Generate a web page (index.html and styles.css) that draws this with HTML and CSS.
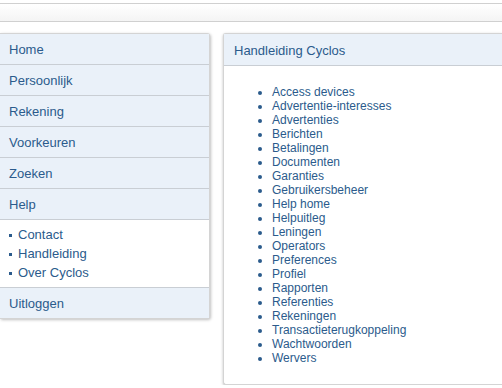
FILE: index.html
```html
<!DOCTYPE html>
<html lang="nl">
<head>
    <meta charset="UTF-8">
    <title>Handleiding Cyclos</title>
    <link rel="stylesheet" href="styles.css">
</head>
<body>
    <div class="topbar"></div>

    <div class="layout">
        <div class="menu">
            <div class="menu-item">Home</div>
            <div class="menu-item">Persoonlijk</div>
            <div class="menu-item">Rekening</div>
            <div class="menu-item">Voorkeuren</div>
            <div class="menu-item">Zoeken</div>
            <div class="menu-item">Help</div>
            <ul class="submenu">
                <li>Contact</li>
                <li>Handleiding</li>
                <li>Over Cyclos</li>
            </ul>
            <div class="menu-item last">Uitloggen</div>
        </div>

        <div class="content">
            <div class="content-header">Handleiding Cyclos</div>
            <ul class="topics">
                <li>Access devices</li>
                <li>Advertentie-interesses</li>
                <li>Advertenties</li>
                <li>Berichten</li>
                <li>Betalingen</li>
                <li>Documenten</li>
                <li>Garanties</li>
                <li>Gebruikersbeheer</li>
                <li>Help home</li>
                <li>Helpuitleg</li>
                <li>Leningen</li>
                <li>Operators</li>
                <li>Preferences</li>
                <li>Profiel</li>
                <li>Rapporten</li>
                <li>Referenties</li>
                <li>Rekeningen</li>
                <li>Transactieterugkoppeling</li>
                <li>Wachtwoorden</li>
                <li>Wervers</li>
            </ul>
        </div>
    </div>
</body>
</html>
```

FILE: styles.css
```css
body {
    font-family: "Liberation Sans", Arial, sans-serif;
    margin: 0;
    background: white;
    color: #2b5b8c;
    overflow: hidden;
}
.topbar {
    margin-top: 3px;
    height: 17px;
    border-top: 1px solid #d0d0d0;
    border-bottom: 1px solid #d0d0d0;
    background: linear-gradient(#ffffff, #f4f4f4);
}
.layout {
    display: flex;
    align-items: flex-start;
    gap: 13px;
    margin-top: 11px;
}
.menu {
    width: 209px;
    flex-shrink: 0;
    background: white;
    border: 1px solid #d4d4d4;
    border-left: none;
    border-radius: 0 3px 3px 0;
    box-shadow: 1px 1px 3px rgba(0,0,0,0.25);
}
.menu-item {
    height: 30px;
    line-height: 32px;
    padding-left: 9px;
    font-size: 13px;
    background: #eaf1f9;
    border-bottom: 1px solid #c9ced4;
    overflow: hidden;
}
.menu-item.last {
    border-bottom: none;
}
.submenu {
    list-style: none;
    margin: 0;
    padding: 5px 0 5px 9px;
    border-bottom: 1px solid #c9ced4;
}
.submenu li {
    font-size: 13px;
    line-height: 19px;
}
.submenu li::before {
    content: "";
    display: inline-block;
    width: 3px;
    height: 3px;
    background: #2b5b8c;
    margin-right: 6px;
    vertical-align: middle;
}
.content {
    flex: 1;
    height: 350px;
    background: white;
    border: 1px solid #d4d4d4;
    border-right: none;
    border-radius: 3px 0 0 3px;
    box-shadow: 0 1px 3px rgba(0,0,0,0.25);
}
.content-header {
    height: 31px;
    line-height: 33px;
    padding-left: 10px;
    font-size: 13px;
    background: #eaf1f9;
    border-bottom: 1px solid #c9ced4;
    overflow: hidden;
}
.topics {
    margin: 19px 0 0 0;
    padding-left: 48px;
}
.topics li {
    font-size: 12px;
    line-height: 14px;
}
```
